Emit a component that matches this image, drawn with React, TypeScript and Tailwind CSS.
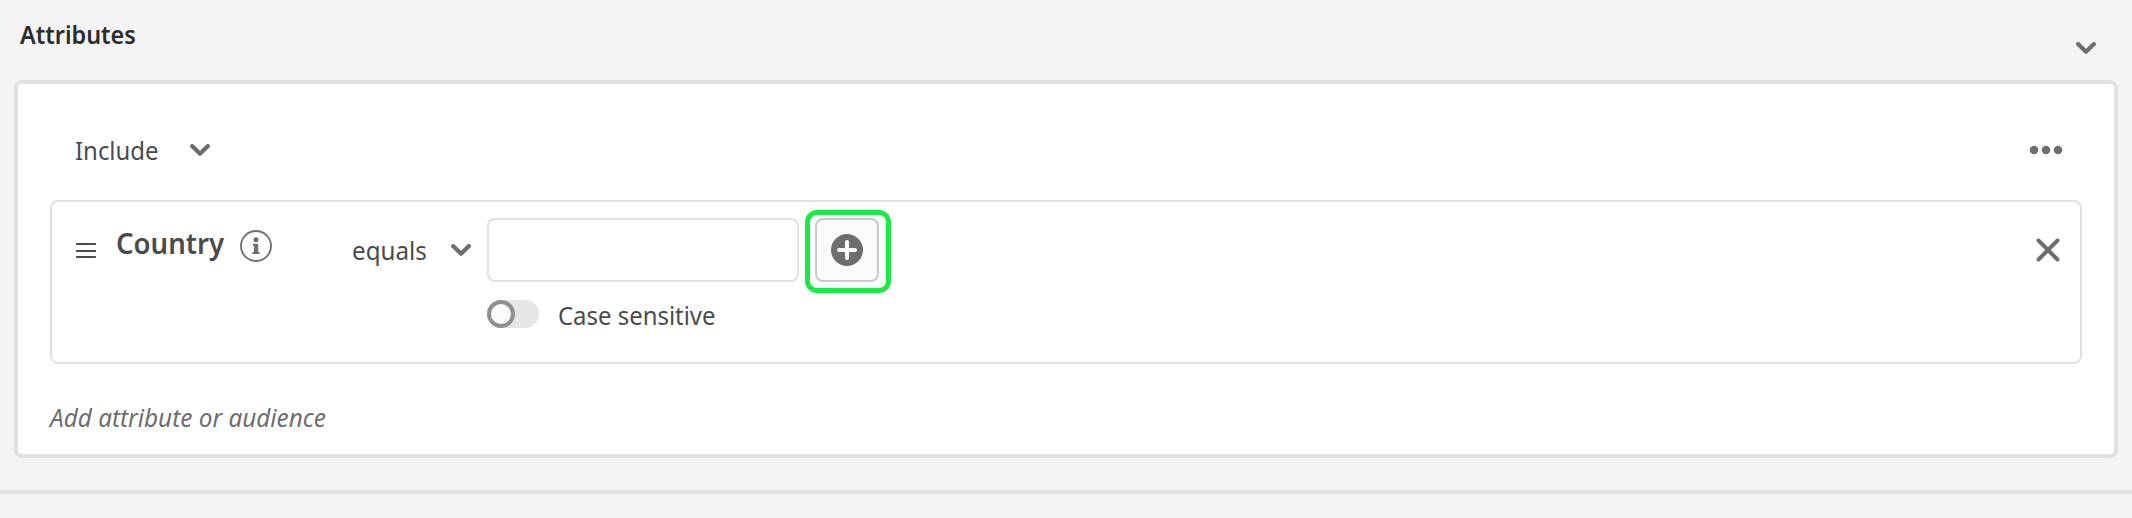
import type { ReactNode } from "react";

function Chevron() {
  return (
    <svg width="20" height="12" viewBox="0 0 20 12" className="block shrink-0" fill="none" stroke="#6e6e6e" strokeWidth="4.2" strokeLinecap="round" strokeLinejoin="round">
      <path d="M2.1 2.1l7.9 7.6 7.9-7.6" />
    </svg>
  );
}

function Label({ className, children }: { className: string; children: ReactNode }) {
  return (
    <div className="shrink-0">
      <span className={"block w-max origin-left whitespace-nowrap leading-[36px] " + className}>{children}</span>
    </div>
  );
}

export default function App() {
  return (
    <div className="flex h-[518px] w-full flex-col bg-[#f4f4f4] font-['Noto_Sans',sans-serif] text-[#4b4b4b]">
      <header className="flex h-20 shrink-0 items-start justify-between pl-5 pr-9">
        <Label className="mt-4 text-[26px] font-semibold text-[#2c2c2c] scale-x-[.9]">Attributes</Label>
        <button className="mt-[42px]"><Chevron /></button>
      </header>

      <section className="mx-[14px] flex h-[378px] shrink-0 flex-col rounded-[8px] border-4 border-[#e1e1e1] bg-white px-8">
        <div className="flex h-[116px] items-center justify-between pl-[25px] pr-[19px] pt-4">
          <div className="flex items-center">
            <div className="w-[115px]"><Label className="text-[26px] scale-x-[.92]">Include</Label></div>
            <Chevron />
          </div>
          <svg width="34" height="10" viewBox="0 0 34 10" fill="#6e6e6e">
            <circle cx="5" cy="5" r="4.3" /><circle cx="17" cy="5" r="4.3" /><circle cx="29" cy="5" r="4.3" />
          </svg>
        </div>

        <div className="flex h-[164px] items-start rounded-[8px] border-2 border-[#e1e1e1] pl-6 pr-5 pt-4">
          <svg width="20" height="16" viewBox="0 0 20 16" className="mt-6 block shrink-0" fill="#4b4b4b">
            <rect y="1" width="20" height="2" rx=".6" /><rect y="8" width="20" height="2" rx=".6" /><rect y="14" width="20" height="2" rx=".6" />
          </svg>
          <div className="ml-5 mt-[7px] w-[124px] shrink-0"><Label className="text-[28px] font-semibold scale-x-[.985]">Country</Label></div>
          <svg width="32" height="32" viewBox="0 0 32 32" className="mt-3 block shrink-0">
            <circle cx="16" cy="16" r="15" fill="none" stroke="#6e6e6e" strokeWidth="1.8" />
            <circle cx="16" cy="9.8" r="2.5" fill="#6e6e6e" />
            <path d="M12.8 13.8H18.2v8.2h1.4V24h-7.2v-2h1.6v-6.2h-1.2z" fill="#6e6e6e" />
          </svg>
          <div className="ml-20 flex h-16 w-[135px] shrink-0 items-center">
            <div className="w-[99px]"><Label className="text-[26px] scale-x-[.93]">equals</Label></div>
            <Chevron />
          </div>
          <div className="shrink-0">
            <div className="flex gap-4">
              <input className="h-16 w-[312px] rounded-[8px] border-2 border-[#e1e1e1] bg-white px-4 text-[26px] outline-none" />
              <button className="relative flex size-16 items-center justify-center rounded-[8px] border-2 border-[#c9c9c9] bg-[#fafafa]">
                <svg width="32" height="32" viewBox="0 0 32 32">
                  <circle cx="16" cy="16" r="16" fill="#6e6e6e" />
                  <path d="M16 8v16M8 16h16" stroke="#fff" strokeWidth="4" strokeLinecap="round" />
                </svg>
                <span className="absolute -left-3 -top-[10px] h-[83px] w-[86px] rounded-[12px] border-[5px] border-[#1aea45]" />
              </button>
            </div>
            <div className="mt-[18px] flex h-7 items-center">
              <div className="h-7 w-[52px] rounded-full bg-[#e6e6e6]">
                <div className="size-7 rounded-full border-4 border-[#909090] bg-[#fafafa]" />
              </div>
              <div className="ml-[19px] pt-[2px]"><Label className="text-[26px] scale-x-[.92]">Case sensitive</Label></div>
            </div>
          </div>
          <svg width="24" height="24" viewBox="0 0 24 24" className="ml-auto mt-5 block shrink-0" stroke="#6e6e6e" strokeWidth="4" strokeLinecap="round">
            <path d="M2.5 2.5l19 19M21.5 2.5l-19 19" />
          </svg>
        </div>

        <div className="mt-[35px]"><Label className="text-[26px] italic text-[#6e6e6e] scale-x-[.935]">Add attribute or audience</Label></div>
      </section>

      <div className="mt-8 h-1 shrink-0 bg-[#e1e1e1]" />
    </div>
  );
}
